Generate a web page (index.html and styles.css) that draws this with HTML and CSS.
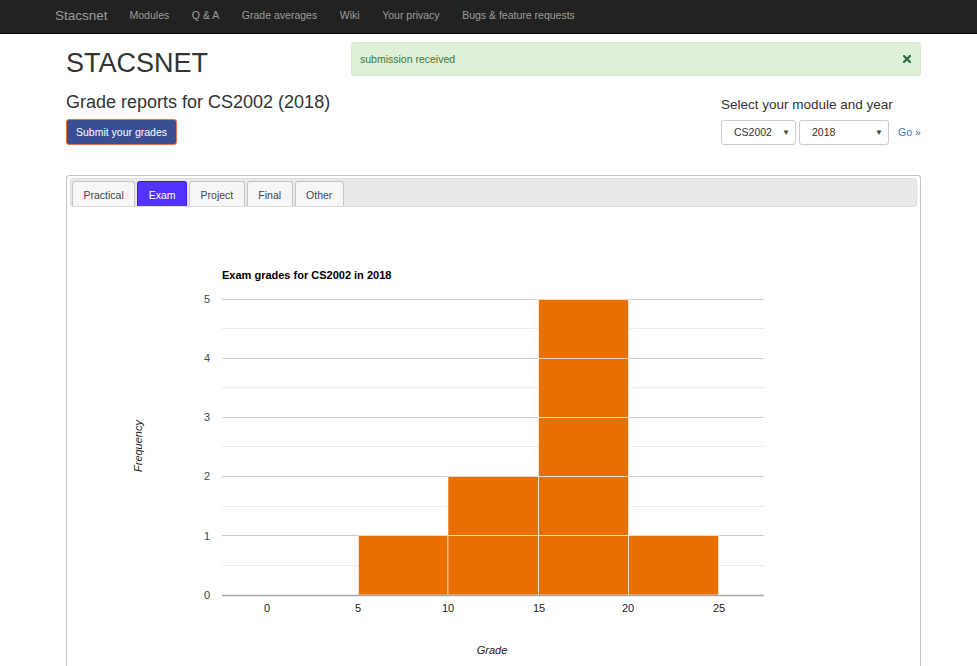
FILE: index.html
```html
<!DOCTYPE html>
<html lang="en">
<head>
<meta charset="utf-8">
<title>Stacsnet</title>
<link rel="stylesheet" href="styles.css">
</head>
<body>
<nav class="navbar">
  <div class="nav-inner">
    <a class="brand" href="#">Stacsnet</a>
    <ul class="nav-links">
      <li><a href="#">Modules</a></li>
      <li><a href="#">Q &amp; A</a></li>
      <li><a href="#">Grade averages</a></li>
      <li><a href="#">Wiki</a></li>
      <li><a href="#">Your privacy</a></li>
      <li><a href="#">Bugs &amp; feature requests</a></li>
    </ul>
  </div>
</nav>

<div class="container">
  <div class="top-row">
    <h1 class="site-title">STACSNET</h1>
    <div class="alert">
      <span>submission received</span>
      <svg class="close" width="8" height="8" viewBox="0 0 8 8"><path d="M1 1L7 7M7 1L1 7" stroke="#2f6e3b" stroke-width="2.2" stroke-linecap="square"/></svg>
    </div>
  </div>

  <div class="head-row">
    <div class="head-left">
      <h3 class="page-title">Grade reports for CS2002 (2018)</h3>
      <button class="btn-submit">Submit your grades</button>
    </div>
    <div class="head-right">
      <div class="select-label">Select your module and year</div>
      <div class="select-row">
        <div class="select sel-module"><span>CS2002</span><span class="arrow">&#9660;</span></div>
        <div class="select sel-year"><span>2018</span><span class="arrow">&#9660;</span></div>
        <a class="go" href="#">Go &raquo;</a>
      </div>
    </div>
  </div>

  <div class="tabs">
    <ul class="tab-nav">
      <li class="tab">Practical</li>
      <li class="tab active">Exam</li>
      <li class="tab">Project</li>
      <li class="tab">Final</li>
      <li class="tab">Other</li>
    </ul>
    <svg class="chart" width="847" height="458" viewBox="70 208 847 458">
      <text x="222" y="280" class="c-title">Exam grades for CS2002 in 2018</text>
      <g class="minor">
        <line x1="222" y1="329.5" x2="764" y2="329.5"/>
        <line x1="222" y1="388.5" x2="764" y2="388.5"/>
        <line x1="222" y1="447.5" x2="764" y2="447.5"/>
        <line x1="222" y1="507.5" x2="764" y2="507.5"/>
        <line x1="222" y1="566.5" x2="764" y2="566.5"/>
      </g>
      <g class="major">
        <line x1="222" y1="300.5" x2="764" y2="300.5"/>
        <line x1="222" y1="359.5" x2="764" y2="359.5"/>
        <line x1="222" y1="418.5" x2="764" y2="418.5"/>
        <line x1="222" y1="477.5" x2="764" y2="477.5"/>
        <line x1="222" y1="536.5" x2="764" y2="536.5"/>
      </g>
      <g class="bars">
        <rect x="358.5" y="536.5" width="89.5" height="59.5"/>
        <rect x="448" y="536.5" width="90.5" height="59.5"/>
        <rect x="448" y="477.5" width="90.5" height="59"/>
        <rect x="538.5" y="536.5" width="90" height="59.5"/>
        <rect x="538.5" y="477.5" width="90" height="59"/>
        <rect x="538.5" y="418.5" width="90" height="59"/>
        <rect x="538.5" y="359.5" width="90" height="59"/>
        <rect x="538.5" y="300.5" width="90" height="59"/>
        <rect x="628.5" y="536.5" width="90" height="59.5"/>
      </g>
      <line class="baseline" x1="222" y1="596.5" x2="764" y2="596.5"/>
      <g class="ylabels">
        <text x="210" y="304">5</text>
        <text x="210" y="363">4</text>
        <text x="210" y="422">3</text>
        <text x="210" y="481">2</text>
        <text x="210" y="541">1</text>
        <text x="210" y="600">0</text>
      </g>
      <g class="xlabels">
        <text x="267" y="613">0</text>
        <text x="358" y="613">5</text>
        <text x="448" y="613">10</text>
        <text x="539" y="613">15</text>
        <text x="628" y="613">20</text>
        <text x="719" y="613">25</text>
      </g>
      <text class="axis-title" x="142" y="447" transform="rotate(-90 142 447)">Frequency</text>
      <text class="axis-title" x="492" y="655">Grade</text>
    </svg>
  </div>
</div>
</body>
</html>
```

FILE: styles.css
```css
* { box-sizing: border-box; }

html, body {
  margin: 0;
  padding: 0;
  background: #fff;
  font-family: "Liberation Sans", Arial, Helvetica, sans-serif;
  font-size: 10.5px;
  color: #333;
  overflow: hidden;
}

a { text-decoration: none; }

/* navbar */
.navbar {
  height: 34px;
  background: #222;
  border-bottom: 1px solid #080808;
}
.nav-inner {
  display: flex;
  align-items: center;
  height: 31px;
  padding-left: 44px;
}
.brand {
  color: #9d9d9d;
  font-size: 13.5px;
  padding: 0 11px;
  line-height: 31px;
}
.nav-links {
  list-style: none;
  display: flex;
  margin: 0;
  padding: 0;
}
.nav-links a {
  display: block;
  color: #9d9d9d;
  font-size: 10.5px;
  padding: 0 11.3px;
  line-height: 31px;
}
.nav-links li:first-child a { padding-left: 11px; }

/* container */
.container {
  width: 855px;
  margin-left: 66px;
}

.top-row {
  display: flex;
  justify-content: space-between;
  align-items: flex-start;
  margin-top: 8px;
}
.site-title {
  margin: 7px 0 0;
  font-size: 27px;
  font-weight: 500;
  line-height: 1.1;
  color: #333;
}
.alert {
  width: 570px;
  height: 34px;
  background: #dff0d8;
  border: 1px solid #d6e9c6;
  border-radius: 3px;
  color: #3c763d;
  display: flex;
  align-items: center;
  justify-content: space-between;
  padding: 0 9px 0 8px;
  font-size: 10.5px;
}
.close { display: block; margin-top: -1px; }

.head-row {
  display: flex;
  justify-content: space-between;
  align-items: flex-start;
  margin-top: 14px;
}
.page-title {
  margin: 0;
  font-size: 18px;
  font-weight: 500;
  line-height: 1.1;
  color: #333;
}
.btn-submit {
  display: block;
  margin-top: 7px;
  width: 111px;
  height: 26px;
  background: #3a4e94;
  border: 1px solid #e2763e;
  border-radius: 3px;
  color: #fff;
  font-family: "Liberation Sans", Arial, sans-serif;
  font-size: 10.5px;
  padding: 0;
}

.head-right {
  width: 200px;
  padding-top: 2px;
}
.select-label {
  font-size: 13.5px;
  line-height: 19px;
  color: #333;
}
.select-row {
  display: flex;
  align-items: center;
  margin-top: 6px;
}
.select {
  height: 25px;
  border: 1px solid #ccc;
  border-radius: 3px;
  display: flex;
  align-items: center;
  justify-content: space-between;
  padding: 0 5px 0 12px;
  color: #333;
  font-size: 10.5px;
  background: #fff;
}
.sel-module { width: 75px; }
.sel-year { width: 90px; margin-left: 3px; }
.arrow { font-size: 8px; color: #444; }
.go {
  margin-left: 9px;
  color: #3d6fc2;
  font-size: 10.5px;
}

/* tabs */
.tabs {
  margin-top: 30px;
  border: 1px solid #c5c5c5;
  border-radius: 3px;
  padding: 2px 3px 0;
  height: 520px;
}
.tab-nav {
  list-style: none;
  margin: 0;
  padding: 2px 0 0 1px;
  display: flex;
  gap: 2px;
  background: #e9e9e9;
  border: 1px solid #dddddd;
  border-radius: 3px;
  height: 29px;
}
.tab {
  height: 25px;
  line-height: 26px;
  padding: 0 10.5px;
  border: 1px solid #c5c5c5;
  border-bottom: none;
  border-radius: 3px 3px 0 0;
  background: #f6f6f6;
  color: #454545;
  font-size: 10.5px;
}
.tab.active {
  background: #5533ff;
  border-color: #3a18f0;
  color: #fff;
}

.chart {
  display: block;
  font-family: "Liberation Sans", Arial, sans-serif;
}
.c-title {
  font-size: 11px;
  font-weight: bold;
  fill: #000;
}
.minor line { stroke: #ebebeb; stroke-width: 1; }
.major line { stroke: #cccccc; stroke-width: 1; }
.bars rect {
  fill: #e87000;
  stroke: #ffffff;
  stroke-opacity: 0.6;
  stroke-width: 1;
}
.baseline { stroke: #a8a8a8; stroke-width: 1.5; }
.ylabels text {
  font-size: 11px;
  fill: #444;
  text-anchor: end;
}
.xlabels text {
  font-size: 11px;
  fill: #222;
  text-anchor: middle;
}
.axis-title {
  font-size: 11px;
  font-style: italic;
  fill: #222;
  text-anchor: middle;
}
```
